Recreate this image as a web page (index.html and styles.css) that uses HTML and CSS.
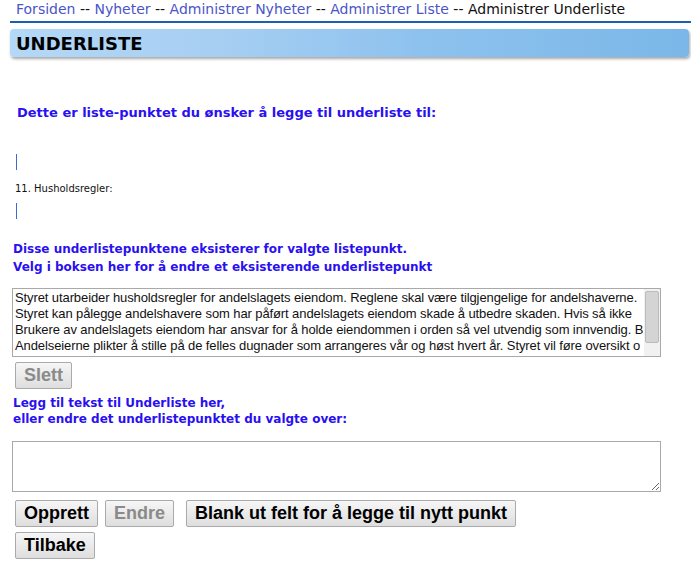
FILE: index.html
```html
<!DOCTYPE html>
<html lang="no">
<head>
    <meta charset="UTF-8">
    <title>Administrer Underliste</title>
    <link rel="stylesheet" href="styles.css">
</head>
<body>
    <div class="crumbs">
        <a href="#">Forsiden</a> -- <a href="#">Nyheter</a> -- <a href="#">Administrer Nyheter</a> -- <a href="#">Administrer Liste</a> -- <span class="here">Administrer Underliste</span>
    </div>
    <h1 class="bar">UNDERLISTE</h1>

    <section class="content">
        <h2 class="lead">Dette er liste-punktet du ønsker å legge til underliste til:</h2>
        <div class="mark"></div>
        <p class="item">11. Husholdsregler:</p>
        <div class="mark"></div>

        <h3 class="note">Disse underlistepunktene eksisterer for valgte listepunkt.<br>Velg i boksen her for å endre et eksisterende underlistepunkt</h3>
        <div class="listbox">
            <div class="lines">
                <div>Styret utarbeider husholdsregler for andelslagets eiendom. Reglene skal være tilgjengelige for andelshaverne.</div>
                <div>Styret kan pålegge andelshavere som har påført andelslagets eiendom skade å utbedre skaden. Hvis så ikke</div>
                <div>Brukere av andelslagets eiendom har ansvar for å holde eiendommen i orden så vel utvendig som innvendig. B</div>
                <div>Andelseierne plikter å stille på de felles dugnader som arrangeres vår og høst hvert år. Styret vil føre oversikt o</div>
            </div>
            <div class="scroll"><div class="thumb"></div></div>
        </div>
        <div class="row"><button class="btn" disabled>Slett</button></div>

        <h3 class="note second">Legg til tekst til Underliste her,<br>eller endre det underlistepunktet du valgte over:</h3>
        <textarea class="entry"></textarea>
        <div class="row">
            <button class="btn">Opprett</button>
            <button class="btn" disabled>Endre</button>
            <button class="btn wide">Blank ut felt for å legge til nytt punkt</button>
        </div>
        <div class="row"><button class="btn">Tilbake</button></div>
    </section>
</body>
</html>
```

FILE: styles.css
```css
body{
    margin: 0;
    padding: 0 0 0 10px;
    font-family: "DejaVu Sans", sans-serif;
    background: #fff;
}
.crumbs{
    padding: 1px 0 0 6px;
    height: 20px;
    font-size: 14px;
    color: #111;
    border-bottom: 2px solid #1a5fb0;
}
.crumbs a{
    color: #4a55c8;
    text-decoration: none;
}
.crumbs .here{
    color: #111;
}
.bar{
    margin: 6px 2px 0 0;
    height: 28px;
    padding: 0 6px;
    font-size: 18px;
    line-height: 29px;
    font-weight: bold;
    color: #000;
    border-radius: 4px;
    background: linear-gradient(to right, #b4d8f7, #a7cff2 30%, #8ec2ee 60%, #7ab7e8);
    box-shadow: 1px 2px 3px rgba(0,0,0,0.35);
}
.content{
    padding: 0 0 0 2px;
}
.lead{
    margin: 48px 0 0 5px;
    font-size: 13px;
    line-height: 16px;
    font-weight: bold;
    color: #2a10f0;
}
.mark{
    margin: 33px 0 0 4px;
    width: 1px;
    height: 16px;
    background: #3d6ad0;
}
.mark + .item + .mark{
    margin-top: 9px;
}
.item{
    margin: 13px 0 0 3px;
    font-size: 10px;
    color: #111;
}
.note{
    margin: 21px 0 0 1px;
    font-size: 12px;
    line-height: 18px;
    font-weight: bold;
    color: #2a10f0;
}
.note.second{
    margin-top: 6px;
    line-height: 16px;
}
.listbox{
    margin: 12px 0 0 0;
    width: 647px;
    height: 67px;
    border: 1px solid #a9a9a9;
    display: flex;
    overflow: hidden;
    background: #fff;
}
.lines{
    flex: 1;
    overflow: hidden;
    padding: 1px 0 0 2px;
    font-family: "Liberation Sans", Arial, sans-serif;
    font-size: 13px;
    letter-spacing: -0.1px;
    line-height: 16px;
    color: #111;
    white-space: nowrap;
}
.scroll{
    width: 14px;
    padding: 2px 1px;
    background: #f1f1f1;
}
.thumb{
    height: 50px;
    background: #d4d4d4;
    border: 1px solid #bcbcbc;
    border-radius: 2px;
}
.row{
    display: flex;
    gap: 7px;
    margin: 5px 0 0 3px;
}
.btn{
    font-family: "Liberation Sans", Arial, sans-serif;
    font-size: 18px;
    font-weight: bold;
    color: #000;
    height: 27px;
    padding: 0 8px;
    border: 1px solid #aaa;
    border-radius: 2px;
    background: linear-gradient(#f6f6f6, #dedede);
}
.btn:disabled{
    color: #8a8a8a;
}
.btn.wide{
    margin-left: 5px;
}
.entry{
    display: block;
    margin: 14px 0 0 0;
    width: 643px;
    height: 45px;
    border: 1px solid #a9a9a9;
    padding: 2px;
    resize: both;
}
.entry + .row{
    margin-top: 8px;
}
```
